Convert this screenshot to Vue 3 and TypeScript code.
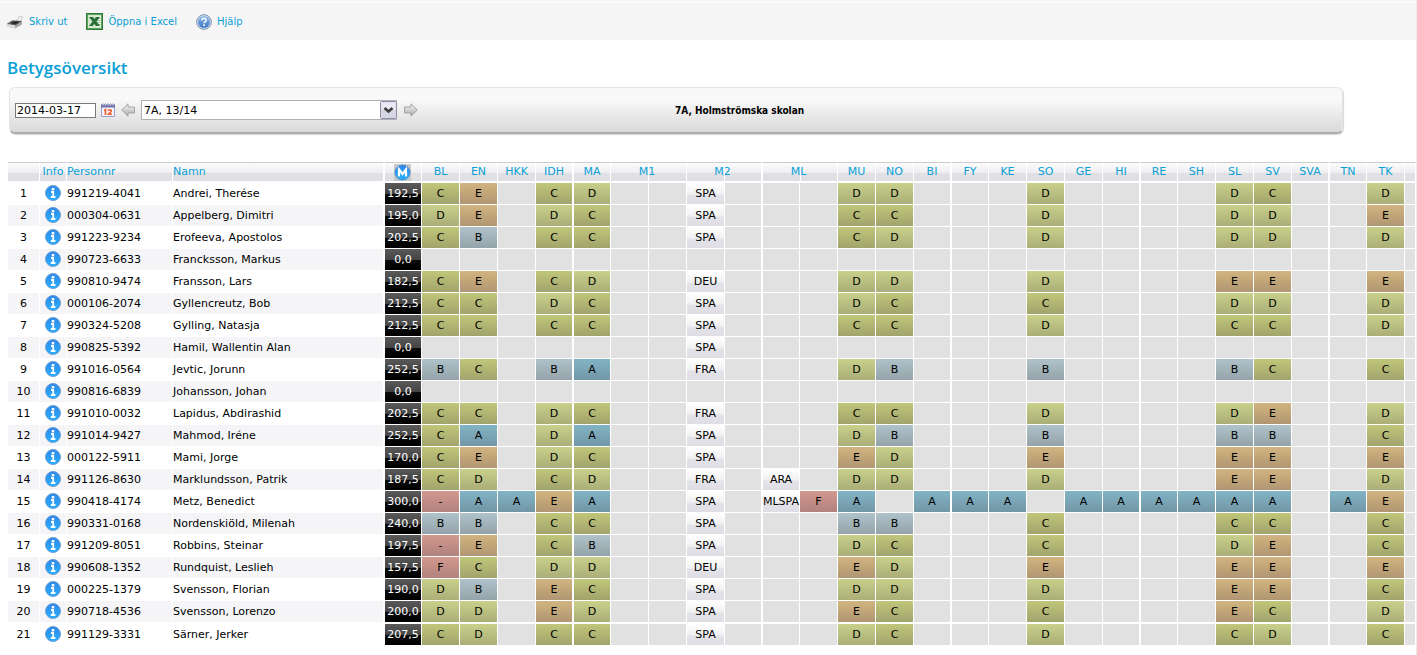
<script setup lang="ts">
import { ref } from 'vue'

interface Student {
  pnr: string
  name: string
  score: string
  cells: string[]
}

interface Subject {
  label: string
  span: number
}

const subjects: Subject[] = [
  'BL', 'EN', 'HKK', 'IDH', 'MA', 'M1', 'M2', 'ML', 'MU', 'NO', 'BI', 'FY', 'KE',
  'SO', 'GE', 'HI', 'RE', 'SH', 'SL', 'SV', 'SVA', 'TN', 'TK', '',
].map((label) => ({ label, span: /^M[12L]$/.test(label) ? 2 : 1 }))

const columnKeys = subjects.flatMap((s) => (s.span === 2 ? [s.label, s.label + 'g'] : [s.label]))

// Subjects in which every graded student has a mark, in column order.
const coreKeys = ['BL', 'EN', 'IDH', 'MA', 'MU', 'NO', 'SO', 'SL', 'SV', 'TK']

function student(
  pnr: string,
  name: string,
  score: string,
  marks = '',
  language = '',
  extra: Record<string, string> = {},
): Student {
  const byKey: Record<string, string> = { M2: language }
  coreKeys.forEach((key, i) => {
    byKey[key] = (marks[i] ?? '').trim()
  })
  Object.assign(byKey, extra)
  return { pnr, name, score, cells: columnKeys.map((key) => byKey[key] ?? '') }
}

const students: Student[] = [
  student('991219-4041', 'Andrei, Therése', '192,5', 'CECDDDDDCD', 'SPA'),
  student('000304-0631', 'Appelberg, Dimitri', '195,0', 'DEDCCCDDDE', 'SPA'),
  student('991223-9234', 'Erofeeva, Apostolos', '202,5', 'CBCCCDDDDD', 'SPA'),
  student('990723-6633', 'Francksson, Markus', '0,0'),
  student('990810-9474', 'Fransson, Lars', '182,5', 'CECDDDDEEE', 'DEU'),
  student('000106-2074', 'Gyllencreutz, Bob', '212,5', 'CCDCDCCDDD', 'SPA'),
  student('990324-5208', 'Gylling, Natasja', '212,5', 'CCCCCCDCCD', 'SPA'),
  student('990825-5392', 'Hamil, Wallentin Alan', '0,0', '', 'SPA'),
  student('991016-0564', 'Jevtic, Jorunn', '252,5', 'BCBADBBBCC', 'FRA'),
  student('990816-6839', 'Johansson, Johan', '0,0'),
  student('991010-0032', 'Lapidus, Abdirashid', '202,5', 'CCDCCCDDED', 'FRA'),
  student('991014-9427', 'Mahmod, Iréne', '252,5', 'CADADBBBBC', 'SPA'),
  student('000122-5911', 'Mami, Jorge', '170,0', 'CEDCEDEEEE', 'SPA'),
  student('991126-8630', 'Marklundsson, Patrik', '187,5', 'CDCDDDDEED', 'FRA', { ML: 'ARA' }),
  student('990418-4174', 'Metz, Benedict', '300,0', '-AEAA  AAE', 'SPA', {
    HKK: 'A', ML: 'MLSPA', MLg: 'F', BI: 'A', FY: 'A', KE: 'A',
    GE: 'A', HI: 'A', RE: 'A', SH: 'A', TN: 'A',
  }),
  student('990331-0168', 'Nordenskiöld, Milenah', '240,0', 'BBCCBBCCCC', 'SPA'),
  student('991209-8051', 'Robbins, Steinar', '197,5', '-ECBDCCDEC', 'SPA'),
  student('990608-1352', 'Rundquist, Leslieh', '157,5', 'FCDDEDEEEE', 'DEU'),
  student('000225-1379', 'Svensson, Florian', '190,0', 'DBECDDDEEC', 'SPA'),
  student('990718-4536', 'Svensson, Lorenzo', '200,0', 'DDEDECCECD', 'SPA'),
  student('991129-3331', 'Särner, Jerker', '207,5', 'CDCCDCDCDC', 'SPA'),
]

function cellClass(value: string): string {
  if (!value) return 'empty'
  if (value.length > 1) return 'lang'
  return value === '-' || value === 'F' ? 'mark-f' : 'mark-' + value.toLowerCase()
}

const date = ref('2014-03-17')
const group = ref('7A, 13/14')
</script>

<template>
  <div class="page">
    <svg class="defs" width="0" height="0" aria-hidden="true">
      <defs>
        <linearGradient id="infoBlue" x1="0" y1="0" x2="0" y2="1">
          <stop offset="0" stop-color="#2f86e8" />
          <stop offset="1" stop-color="#27b0ff" />
        </linearGradient>
        <linearGradient id="arrowGrey" x1="0" y1="0" x2="0" y2="1">
          <stop offset="0" stop-color="#fafafa" />
          <stop offset="1" stop-color="#a8a8a8" />
        </linearGradient>
        <linearGradient id="helpBlue" x1="0" y1="0" x2="0" y2="1">
          <stop offset="0" stop-color="#8db8ea" />
          <stop offset="1" stop-color="#3c74c4" />
        </linearGradient>
      </defs>
    </svg>

    <nav class="toolbar">
      <a href="#" class="tool">
        <svg width="18" height="16" viewBox="0 0 18 16">
          <path d="M10 8 13.500 2 16.500 3 14 9z" fill="#f4f4f4" stroke="#b5b5b5" stroke-width=".7" />
          <path d="M.800 10 6 6.500 16 7 15.800 10.500 9 14.500 1 12.500z" fill="#a3a3a3" />
          <path d="M.800 10 6 6.500 16 7 9.500 11.600z" fill="#666" />
          <path d="M4.500 9.500 8 7.200 14 7.600 9.500 10.500z" fill="#2a2a2a" />
          <path d="M1 12.500.800 10 9.500 11.600 9 14.500z" fill="#dcdcdc" />
        </svg>
        Skriv ut
      </a>
      <a href="#" class="tool">
        <svg width="17" height="17" viewBox="0 0 17 17">
          <rect x=".5" y=".5" width="16" height="16" fill="#d3e8cf" stroke="#2e7a36" />
          <rect x="1.500" y="1.500" width="14" height="14" fill="none" stroke="#5da35f" />
          <path d="M10 3.500h5v10h-5z" fill="#f7fbf5" />
          <path d="M11 5.500h3.500M11 7.500h3.500M11 9.500h3.500M11 11.500h3.500" stroke="#93c08f" />
          <path d="M3 4h4l1.500 2L10 4h4l-3.500 4.500L14 13h-4l-1.700-2L6.500 13H3l3.500-4.500z" fill="#2a6f35" />
        </svg>
        Öppna i Excel
      </a>
      <a href="#" class="tool">
        <svg width="16" height="16" viewBox="0 0 16 16">
          <circle cx="8" cy="8" r="7.300" fill="#dfe9f6" stroke="#7088ad" />
          <circle cx="8" cy="8" r="6" fill="url(#helpBlue)" />
          <path d="M5.900 6.400c0-2.700 4.300-2.700 4.300-.200 0 1.500-2.100 1.500-2.100 3" fill="none" stroke="#fff" stroke-width="1.500" />
          <circle cx="8.100" cy="11.300" r="1" fill="#fff" />
        </svg>
        Hjälp
      </a>
    </nav>

    <h1>Betygsöversikt</h1>

    <form class="panel" @submit.prevent>
      <input v-model="date" class="date" type="text" aria-label="Datum" />
      <button class="icon-button calendar" type="button" aria-label="Välj datum">
        <svg width="16" height="16" viewBox="0 0 16 16">
          <path d="M1.500 3h13v11.500h-13z" fill="#f4f5ff" stroke="#9a9ec4" />
          <path d="M1 2.500h14v3H1z" fill="#6b70a8" />
          <path d="M3 1v3M5.500 1v3M8 1v3M10.500 1v3M13 1v3" stroke="#b9bcd8" />
          <path d="M4 8.500 5.500 7.700V13" fill="none" stroke="#f0602c" stroke-width="1.700" />
          <path d="M8 8.800C8.300 7.500 11.500 7.400 11.300 9.200 11.100 10.400 8.800 11.200 8.300 12.300H12" fill="none" stroke="#f0602c" stroke-width="1.600" />
        </svg>
      </button>
      <button class="icon-button" type="button" aria-label="Föregående klass">
        <svg width="14" height="14" viewBox="0 0 14 14">
          <path d="M.7 7 7 .800v3.200h6.500v6H7v3.200z" fill="url(#arrowGrey)" stroke="#a3a3a3" />
        </svg>
      </button>
      <span class="picker">
        <select v-model="group" aria-label="Klass">
          <option>7A, 13/14</option>
        </select>
        <svg class="chevron" width="17" height="18" viewBox="0 0 17 18" aria-hidden="true">
          <rect x=".5" y=".5" width="16" height="17" rx="1" fill="#d6d6e4" stroke="#8f90ab" />
          <path d="M1.500 1.500h14V9h-14z" fill="#eaeaf2" />
          <path d="M4.500 7 8.500 10.500 12.500 7" fill="none" stroke="#404040" stroke-width="2.800" />
        </svg>
      </span>
      <button class="icon-button" type="button" aria-label="Nästa klass">
        <svg width="14" height="14" viewBox="0 0 14 14">
          <path d="M13.300 7 7 .800v3.200H.5v6H7v3.200z" fill="url(#arrowGrey)" stroke="#a3a3a3" />
        </svg>
      </button>
      <strong class="heading">7A, Holmströmska skolan</strong>
    </form>

    <table class="grades">
      <colgroup>
        <col class="c-index" />
        <col class="c-info" />
        <col class="c-pnr" />
        <col class="c-name" />
        <col class="c-score" />
        <col
          v-for="(key, i) in columnKeys"
          :key="key"
          :class="i === columnKeys.length - 1 ? 'c-rest' : i % 5 === 4 ? 'c-narrow' : 'c-subject'"
        />
      </colgroup>
      <thead>
        <tr>
          <th></th>
          <th>Info</th>
          <th class="text">Personnr</th>
          <th class="text wide-gap">Namn</th>
          <th class="score-head">
            <svg width="17" height="17" viewBox="0 0 17 17" role="img" aria-label="Meritvärde">
              <rect width="17" height="17" fill="#c8c8c8" />
              <circle cx="8.500" cy="8.500" r="7.500" fill="url(#infoBlue)" stroke="#4a8fd8" />
              <path d="M5 12.500V5.500L8.500 10 12 5.500v7" fill="none" stroke="#fff" stroke-width="2.200" />
            </svg>
          </th>
          <th
            v-for="(s, i) in subjects"
            :key="i"
            :colspan="s.span"
            :class="{ double: s.span === 2, 'wide-gap': ['IDH', 'M2', 'BI', 'HI', 'SVA'].includes(s.label) }"
          >{{ s.label }}</th>
        </tr>
      </thead>
      <tbody>
        <tr v-for="(row, n) in students" :key="row.pnr">
          <td class="side">{{ n + 1 }}</td>
          <td class="side">
            <a href="#" class="info-link" :aria-label="'Info om ' + row.name">
              <svg width="16" height="16" viewBox="0 0 16 16">
                <circle cx="8" cy="8" r="7.500" fill="url(#infoBlue)" stroke="#6d9fd6" />
                <path d="M8 3v2.400" stroke="#fff" stroke-width="2.600" />
                <path d="M6 7h2.200v4.500M5.800 12h4.600" fill="none" stroke="#fff" stroke-width="1.800" />
              </svg>
            </a>
          </td>
          <td class="side text">{{ row.pnr }}</td>
          <td class="side text wide-gap">{{ row.name }}</td>
          <td class="score">{{ row.score }}</td>
          <td
            v-for="(value, i) in row.cells"
            :key="i"
            :class="[cellClass(value), { 'wide-gap': i % 5 === 3 }]"
          >{{ value }}</td>
        </tr>
      </tbody>
    </table>
  </div>
</template>

<style>
body {
  margin: 0;
  background: #fff;
}
</style>

<style scoped>
.page {
  box-sizing: border-box;
  min-height: 100vh;
  padding-bottom: 10px;
  border-right: 1px solid #ebebeb;
  font-family: Verdana, 'DejaVu Sans', sans-serif;
  font-size: 11px;
  color: #000;
}

.defs {
  display: block;
}

svg {
  display: block;
  flex: none;
}

.toolbar {
  display: flex;
  align-items: center;
  gap: 19px;
  box-sizing: border-box;
  height: 40px;
  padding: 3px 6px 0;
  background: linear-gradient(#f5f5f5 2px, #fff 2px, #fff 3px, #f5f5f5 3px);
}

.tool {
  display: flex;
  align-items: center;
  gap: 5px;
  font-size: 10px;
  color: #0a9fd6;
  text-decoration: none;
}

h1 {
  margin: 16px 0 0 7px;
  font-family: 'Trebuchet MS', 'Open Sans', sans-serif;
  font-size: 17px;
  font-weight: 600;
  line-height: 24px;
  color: #0a9fd6;
}

.panel {
  position: relative;
  display: flex;
  align-items: center;
  box-sizing: border-box;
  height: 47px;
  margin: 7px 73px 0 9px;
  padding: 0 5px;
  border: 1px solid #e4e4e4;
  border-bottom: 2px solid #adadad;
  border-radius: 6px;
  background: linear-gradient(#f8f8f8, #f9f9f9 25%, #d9d9d9);
  box-shadow: 1px 1px 1px #d8d8d8;
}

.date {
  box-sizing: border-box;
  width: 81px;
  height: 15px;
  padding: 0 1px;
  border: 1px solid #7a7a7a;
  background: #fff;
  font: inherit;
}

.icon-button {
  padding: 0;
  border: 0;
  background: none;
}

.calendar {
  margin: 0 5px 0 4px;
}

.picker {
  position: relative;
  width: 256px;
  margin: 0 7px 0 6px;
}

.picker select {
  display: block;
  box-sizing: border-box;
  width: 100%;
  height: 20px;
  padding: 0 20px 0 2px;
  border: 1px solid #b0b0b0;
  border-radius: 0;
  background: #fff;
  font: inherit;
  color: #000;
  appearance: none;
}

.chevron {
  position: absolute;
  top: 1px;
  right: 0;
  pointer-events: none;
}

.heading {
  margin-left: 257px;
  font-family: Tahoma, 'DejaVu Sans Condensed', 'DejaVu Sans', sans-serif;
  font-size: 10px;
}

.grades {
  width: calc(100% - 8px);
  min-width: 1404px;
  margin: 28px 0 0 8px;
  table-layout: fixed;
  border-spacing: 0;
}

.c-index { width: 32px; }
.c-info { width: 27px; }
.c-pnr { width: 106px; }
.c-name { width: 212px; }
.c-score { width: 37px; }
.c-subject { width: 38px; }
.c-narrow { width: 37px; }

th,
td {
  box-sizing: border-box;
  padding: 0;
  border: 0 solid #fff;
  border-right-width: 1px;
  background-clip: padding-box;
  line-height: 18px;
  text-align: center;
  white-space: nowrap;
}

th {
  position: relative;
  height: 21px;
  border-top: 1px solid #ccc;
  border-bottom-width: 2px;
  background-color: #fff;
  background-image: linear-gradient(#fbfbfc, #f0f0f2 50%, #e0e0e5 60%, #dedee3);
  font-weight: normal;
  color: #0a9fd6;
}

td {
  height: 22px;
  border-bottom-width: 1px;
}

.text {
  text-align: left;
}

.wide-gap {
  border-right-width: 2px;
}

.double {
  padding-right: 3px;
}

.double::after {
  content: '';
  position: absolute;
  top: 0;
  bottom: 0;
  left: 37px;
  width: 1px;
  background: #fff;
}

.score-head {
  padding-right: 2px;
}

.score-head svg {
  margin: 0 auto;
}

tbody tr:nth-child(even) .side {
  background-color: #f5f5f8;
}

tbody tr:last-child td {
  height: 23px;
  border-top-width: 1px;
}

.info-link {
  display: block;
  width: 16px;
  margin: 0 auto 2px;
}

.score {
  background-image: linear-gradient(#5a5a5a, #444 50%, #0c0c0c 52%, #000);
  color: #fff;
}

.empty { background-color: #e1e1e1; }
.lang { background-image: linear-gradient(#fff, #f1f1f3 50%, #e2e2e8 60%, #dedee4); }
.mark-a { background-image: linear-gradient(#82b4c5, #7296a6); }
.mark-b { background-image: linear-gradient(#afc2ca, #94a3a9); }
.mark-c { background-image: linear-gradient(#c0c67a, #a1a46c); }
.mark-d { background-image: linear-gradient(#c9d08a, #aaae78); }
.mark-e { background-image: linear-gradient(#d1b480, #b09672); }
.mark-f { background-image: linear-gradient(#d2998f, #b1827d); }
</style>
